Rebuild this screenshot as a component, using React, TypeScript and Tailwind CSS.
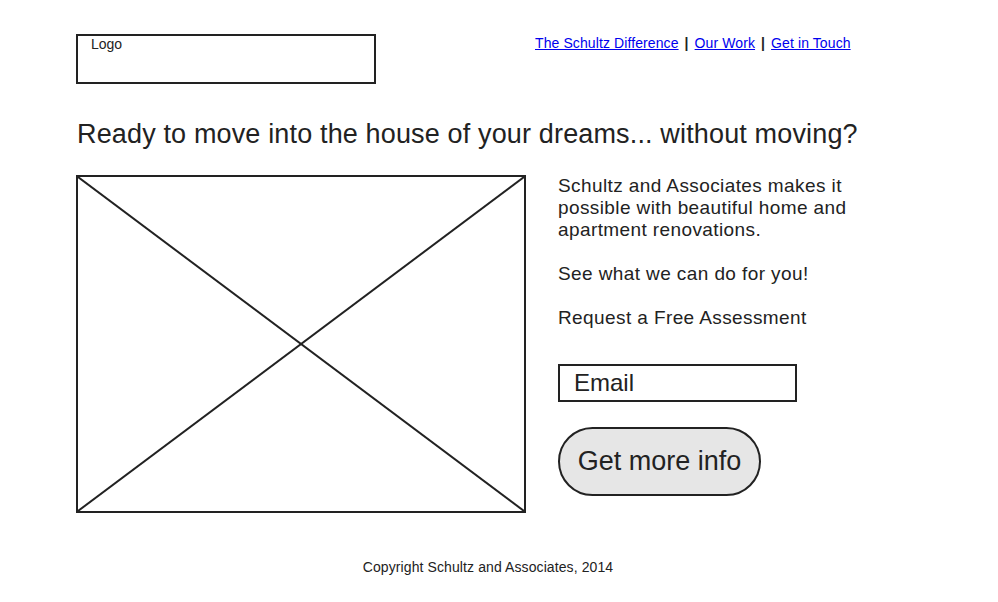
const font = { fontFamily: '"Liberation Sans", Arial, sans-serif' }

const Placeholder = () => (
    <div className="relative w-[450px] h-[338px] border-2 border-[#222]">
        <svg
            className="absolute inset-0 w-full h-full"
            viewBox="0 0 100 100"
            preserveAspectRatio="none"
        >
            <line x1="0" y1="0" x2="100" y2="100" stroke="#222" strokeWidth="2" vectorEffect="non-scaling-stroke" />
            <line x1="100" y1="0" x2="0" y2="100" stroke="#222" strokeWidth="2" vectorEffect="non-scaling-stroke" />
        </svg>
    </div>
)

export default function App() {
    return (
        <div className="w-[998px] h-[602px] bg-white text-[#222] relative" style={font}>
            <header className="flex pt-[34px] pl-[76px]">
                <div className="w-[300px] h-[50px] border-2 border-[#222] pl-[13px] text-[14px] leading-[16px]">
                    Logo
                </div>
                <nav className="ml-[159px] mt-[-1px] text-[14px] flex gap-[6px] items-start tracking-[0.1px]">
                    <a href="#" className="text-[#0000ee] underline">The Schultz Difference</a>
                    <span className="font-bold">|</span>
                    <a href="#" className="text-[#0000ee] underline">Our Work</a>
                    <span className="font-bold">|</span>
                    <a href="#" className="text-[#0000ee] underline">Get in Touch</a>
                </nav>
            </header>

            <h1 className="pl-[77px] mt-[34px] text-[27px] leading-[32px] tracking-[0.15px]">
                Ready to move into the house of your dreams... without moving?
            </h1>

            <main className="flex pl-[76px] mt-[25px] gap-[32px]">
                <Placeholder />
                <div className="flex flex-col">
                    <p className="text-[19px] leading-[22px] w-[310px] tracking-[0.4px]">
                        Schultz and Associates makes it possible with beautiful home and apartment renovations.
                    </p>
                    <p className="text-[19px] leading-[22px] mt-[22px] tracking-[0.4px]">See what we can do for you!</p>
                    <p className="text-[19px] leading-[22px] mt-[22px] tracking-[0.4px]">Request a Free Assessment</p>
                    <div className="mt-[35px] w-[239px] h-[38px] border-2 border-[#222] flex items-center pl-[14px] text-[24px]">
                        Email
                    </div>
                    <button className="mt-[25px] w-[203px] h-[69px] rounded-full border-2 border-[#222] bg-[#e6e6e6] text-[27px] text-[#222]">
                        Get more info
                    </button>
                </div>
            </main>

            <footer className="absolute left-0 right-0 top-[557px] text-center text-[14px] tracking-[0.1px]">
                <span className="ml-[-22px]">Copyright Schultz and Associates, 2014</span>
            </footer>
        </div>
    )
}
